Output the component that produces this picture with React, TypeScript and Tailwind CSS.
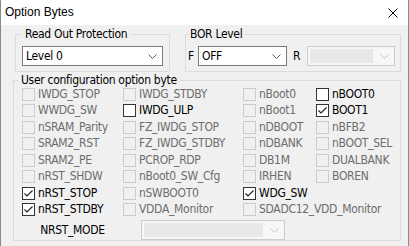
import React from "react";

type State = "d" | "off" | "on";

const narrow = "font-['DejaVu_Sans_Condensed','Liberation_Sans',sans-serif]";

const columns: [string, State][][] = [
  [
    ["IWDG_STOP", "d"],
    ["WWDG_SW", "d"],
    ["nSRAM_Parity", "d"],
    ["SRAM2_RST", "d"],
    ["SRAM2_PE", "d"],
    ["nRST_SHDW", "d"],
    ["nRST_STOP", "on"],
    ["nRST_STDBY", "on"],
  ],
  [
    ["IWDG_STDBY", "d"],
    ["IWDG_ULP", "off"],
    ["FZ_IWDG_STOP", "d"],
    ["FZ_IWDG_STDBY", "d"],
    ["PCROP_RDP", "d"],
    ["nBoot0_SW_Cfg", "d"],
    ["nSWBOOT0", "d"],
    ["VDDA_Monitor", "d"],
  ],
  [
    ["nBoot0", "d"],
    ["nBoot1", "d"],
    ["nDBOOT", "d"],
    ["nDBANK", "d"],
    ["DB1M", "d"],
    ["IRHEN", "d"],
    ["WDG_SW", "on"],
    ["SDADC12_VDD_Monitor", "d"],
  ],
  [
    ["nBOOT0", "off"],
    ["BOOT1", "on"],
    ["nBFB2", "d"],
    ["nBOOT_SEL", "d"],
    ["DUALBANK", "d"],
    ["BOREN", "d"],
  ],
];

function Check({ state }: { state: State }) {
  if (state === "d") {
    return <span className="w-[13px] h-[13px] shrink-0 border border-[#cccccc] bg-[#f0f0f0]" />;
  }
  return (
    <span className="w-[13px] h-[13px] shrink-0 border border-[#333333] bg-white flex items-center justify-center">
      {state === "on" && (
        <svg width="11" height="11" viewBox="0 0 11 11">
          <path d="M1.5 5.5 L4 8 L9.5 2.5" fill="none" stroke="#222222" strokeWidth="1.2" />
        </svg>
      )}
    </span>
  );
}

function Chevron({ light }: { light?: boolean }) {
  return (
    <svg width="9" height="5" viewBox="0 0 9 5">
      <path d="M0.5 0.5 L4.5 4.5 L8.5 0.5" fill="none" stroke={light ? "#c8c8c8" : "#5a5a5a"} />
    </svg>
  );
}

function Combo({ value, width }: { value: string; width: string }) {
  return (
    <div className={`h-[20px] ${width} flex items-center border border-[#7a7a7a] bg-white pl-[3px] pr-[5px]`}>
      <span className="flex-1">{value}</span>
      <Chevron />
    </div>
  );
}

function DisabledCombo({ width }: { width: string }) {
  return (
    <div className={`h-[20px] ${width} flex items-center border border-[#cccccc] bg-[#f7f7f7] p-[2px] pr-[5px]`}>
      <div className="flex-1 h-full bg-[#e8e8e8]" />
      <div className="w-[16px] flex justify-end">
        <Chevron light />
      </div>
    </div>
  );
}

export default function App() {
  return (
    <div
      className={`w-[409px] h-[246px] bg-[#f0f0f0] border-x border-[#8a8a8a] overflow-hidden text-[12px] leading-[15px] tracking-[-0.3px] text-black ${narrow}`}
    >
      {/* Title bar */}
      <div className="h-[25px] bg-white flex items-center justify-between pl-[4px] pr-[10px]">
        <span className="font-['Liberation_Sans',sans-serif] text-[12px] tracking-normal">Option Bytes</span>
        <svg width="10" height="10" viewBox="0 0 10 10">
          <path d="M0.5 0.5 L9.5 9.5 M9.5 0.5 L0.5 9.5" stroke="#000000" strokeWidth="1" />
        </svg>
      </div>

      {/* Top groups */}
      <div className="flex pl-[14px] pr-[7px] mt-[2px]">
        <fieldset className="w-[155px] border border-[#dcdcdc] px-[6px] pb-[5px]">
          <legend className="px-[3px]">Read Out Protection</legend>
          <div className="mt-[4px]">
            <Combo value="Level 0" width="w-[141px]" />
          </div>
        </fieldset>

        <fieldset className="ml-[15px] flex-1 border border-[#dcdcdc] pl-[2px] pr-[5px] pb-[5px]">
          <legend className="px-[2px]">BOR Level</legend>
          <div className="mt-[4px] flex items-center">
            <span className="w-[10px]">F</span>
            <Combo value="OFF" width="w-[89px]" />
            <span className="w-[20px] pl-[6px]">R</span>
            <DisabledCombo width="flex-1" />
          </div>
        </fieldset>
      </div>

      {/* User configuration */}
      <fieldset className="mt-[1px] ml-[12px] mr-[7px] border border-[#dcdcdc] pl-[4px]">
        <legend className="px-[3px]">User configuration option byte</legend>
        <div className="-mt-[2px] ml-[4px] grid grid-flow-col grid-cols-[101px_120px_73px_1fr] grid-rows-[repeat(8,16.5px)]">
          {columns.map((col, ci) =>
            col.map(([label, state]) => (
              <div key={ci + label} className="flex items-center gap-[3px] whitespace-nowrap">
                <Check state={state} />
                <span className={state === "d" ? "text-[#6d6d6d]" : "text-black"}>{label}</span>
              </div>
            ))
          )}
        </div>
        <div className="mt-[2px] ml-[4px] h-[20px] flex items-center">
          <span className="w-[101px] text-center">NRST_MODE</span>
          <div className="ml-[18px]">
            <DisabledCombo width="w-[144px]" />
          </div>
        </div>
      </fieldset>
    </div>
  );
}
